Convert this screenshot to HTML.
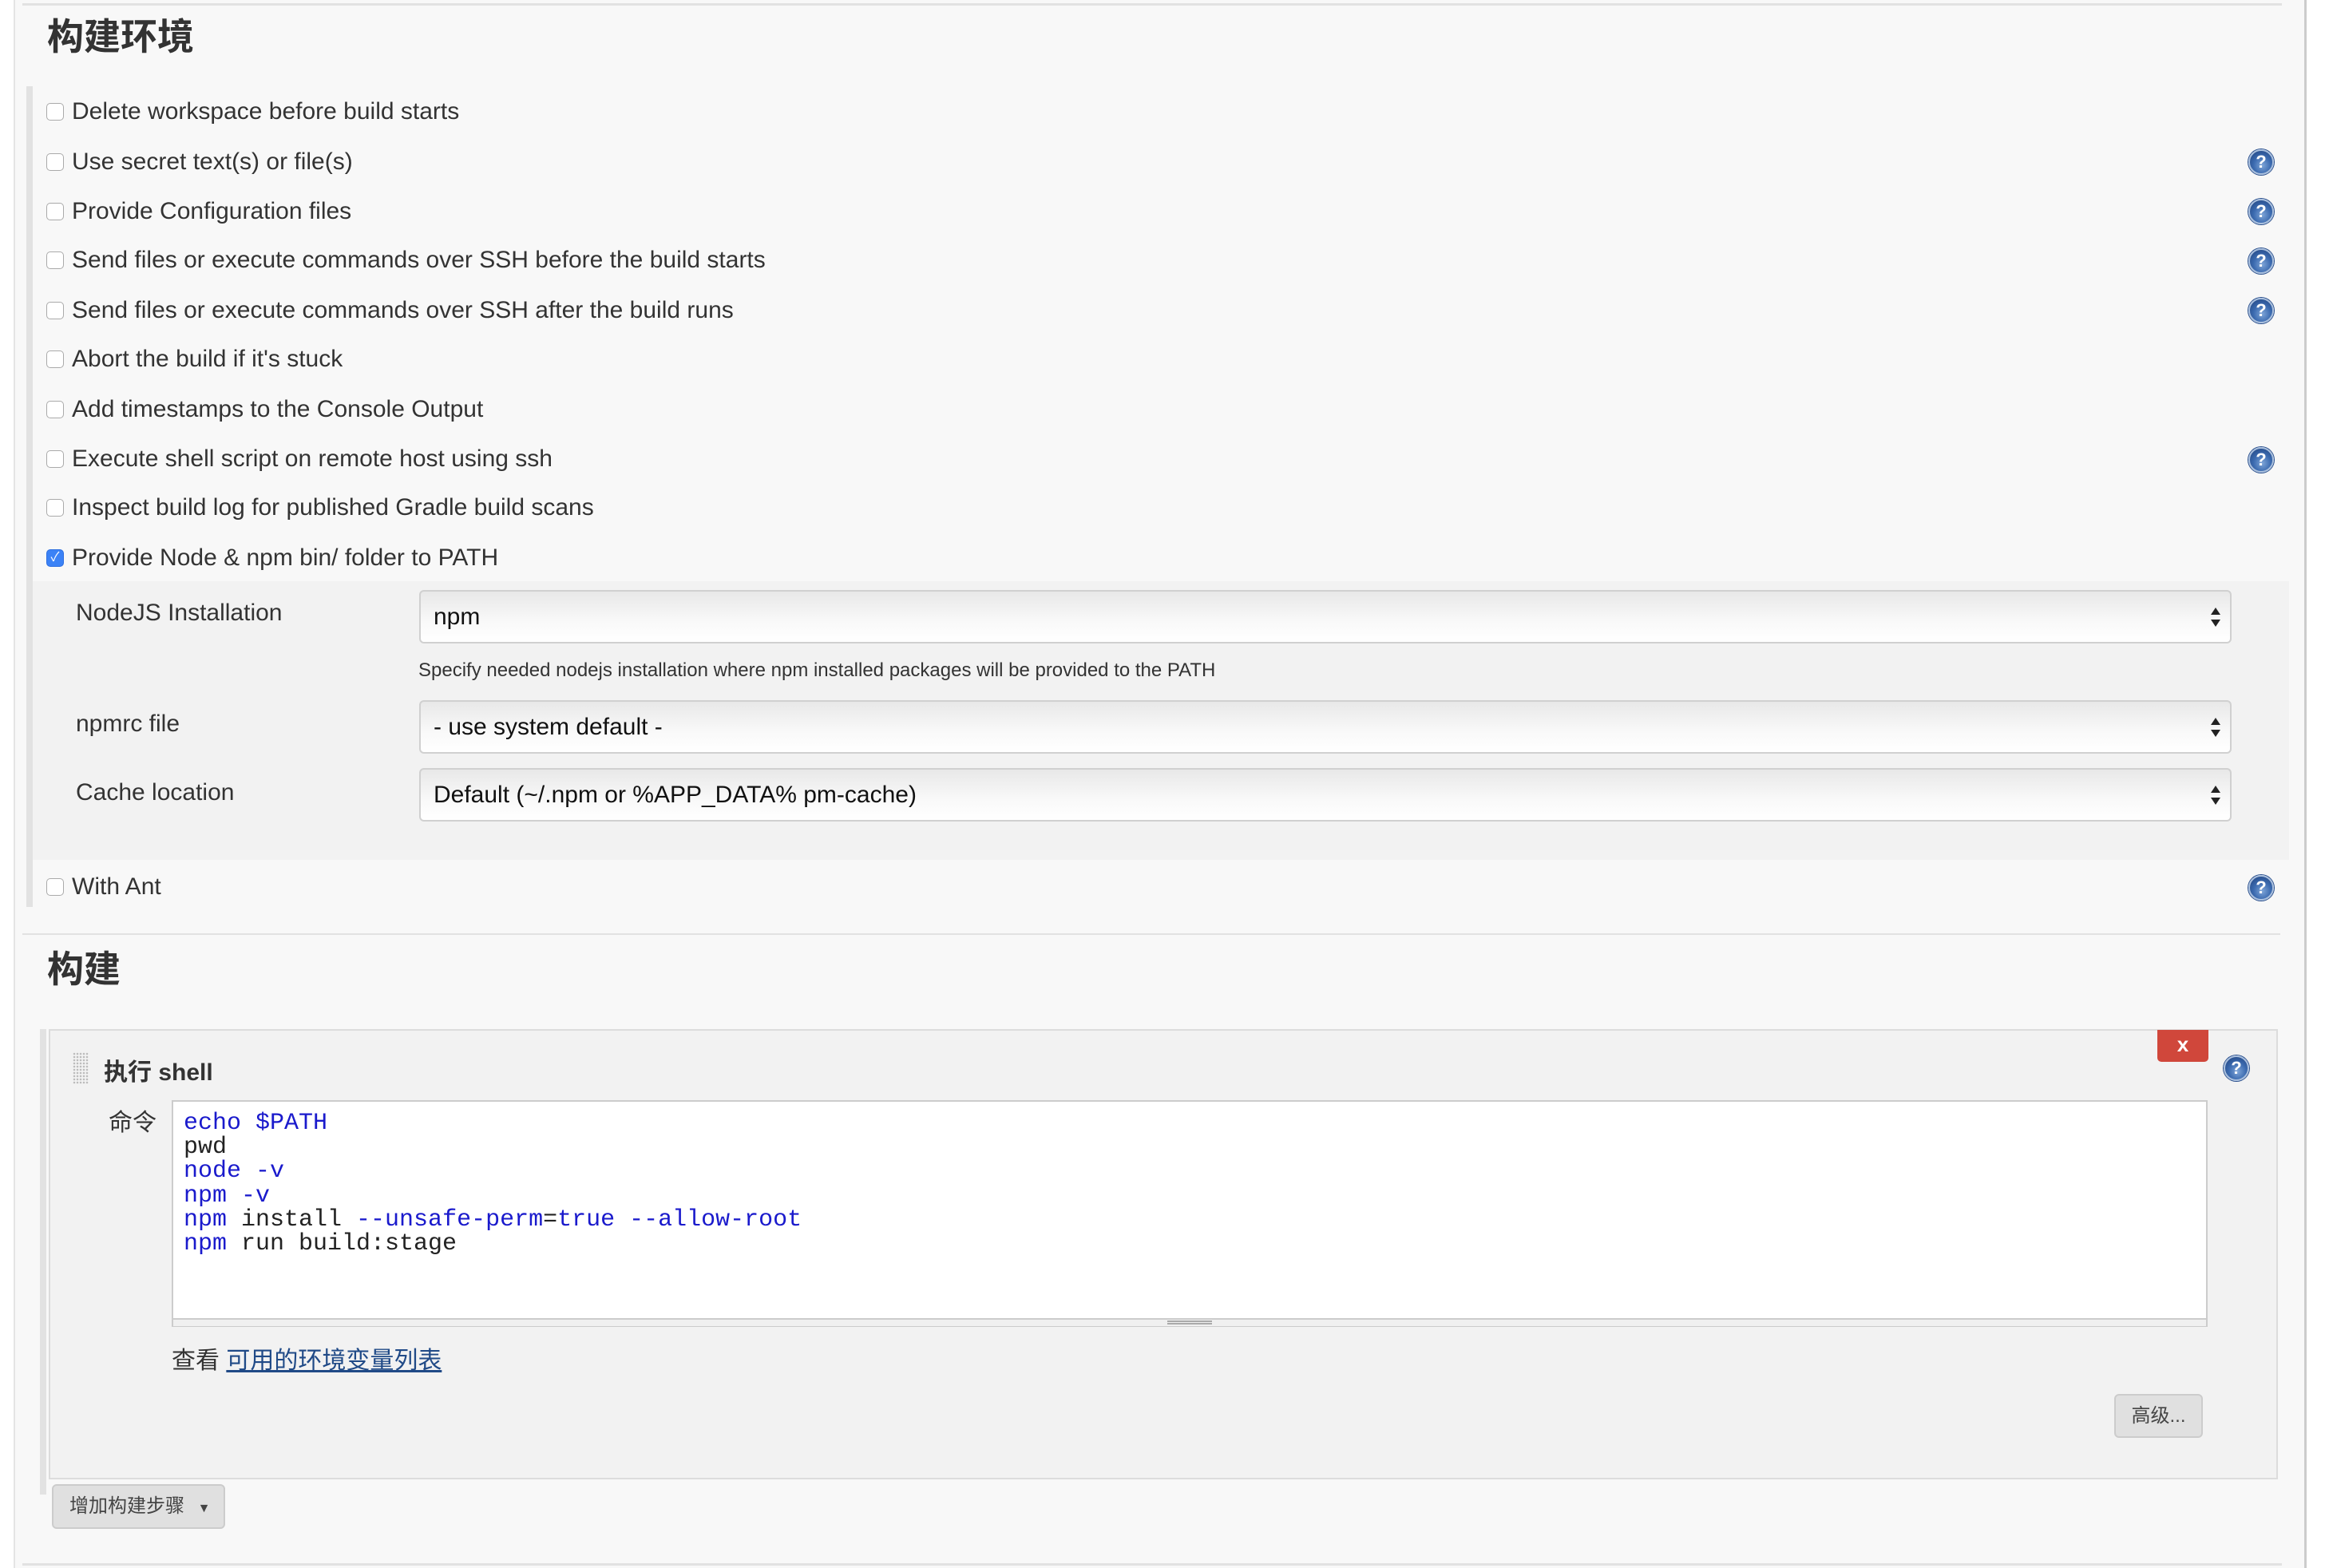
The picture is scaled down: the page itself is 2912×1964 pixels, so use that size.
<!DOCTYPE html>
<html><head><meta charset="utf-8"><style>
*{margin:0;padding:0;box-sizing:border-box}
body{width:2912px;height:1964px;background:#fff;position:relative;overflow:hidden;font-family:"Liberation Sans","Noto Sans CJK SC",sans-serif;color:#333}
.a{position:absolute}
.page{left:17px;top:0;width:2872px;height:1964px;background:#f8f8f8;border-left:2px solid #e4e4e4;border-right:3px solid #ccc}
.hl{height:3px;background:#e2e2e2}
.h{font-size:46px;font-weight:bold;color:#333;line-height:50px}
.row{left:58px;height:30px;display:flex;align-items:center;font-size:30px;color:#333;white-space:nowrap}
.cb{width:22px;height:22px;border:1.5px solid #aaa;border-radius:5px;background:#fff;margin-right:10px}
.cb.on{background:#3b82f6;border-color:#2f6fe0;color:#fff;font-size:16px;text-align:center;line-height:20px}
.help{width:32px;height:32px;border-radius:50%;background:radial-gradient(circle at 55% 65%,#7ea5d8 0%,#3c6bb0 45%,#1d3f7a 100%);border:2px solid #a9bfdd;box-shadow:0 0 0 1px #2a4f8c;color:#fff;font:bold 22px "Liberation Sans",sans-serif;text-align:center;line-height:27px}
.lbl{font-size:30px;color:#333;line-height:30px}
.sel{left:525px;width:2270px;height:67px;border:2px solid #d0d0d0;border-radius:6px;background:linear-gradient(#e8e8e8,#f9f9f9 60%,#fff);font-size:30px;color:#111;line-height:63px;padding-left:16px}
.sel:after{content:"";position:absolute;right:12px;top:20px;border-left:6px solid transparent;border-right:6px solid transparent;border-bottom:9px solid #222}
.sel:before{content:"";position:absolute;right:12px;top:35px;border-left:6px solid transparent;border-right:6px solid transparent;border-top:9px solid #222}
.code{font-family:"Liberation Mono",monospace;font-size:30px;line-height:30.2px;color:#222;white-space:pre}
.b{color:#1a1acc}
.btn{background:#e0e0e0;border:2px solid #ccc;border-radius:6px;font-size:24px;color:#444;text-align:center}
</style></head><body>
<div class="a page"></div>
<div class="a hl" style="left:28px;top:4px;width:2830px"></div>
<div class="a h" style="left:59px;top:21px">构建环境</div>
<div class="a" style="left:33px;top:108px;width:8px;height:1028px;background:#e2e2e2"></div>
<div class="a" style="left:41px;top:728px;width:2826px;height:349px;background:#f2f2f2"></div>

<div class="a row" style="top:125px"><div class="cb"></div>Delete workspace before build starts</div>
<div class="a row" style="top:188px"><div class="cb"></div>Use secret text(s) or file(s)</div>
<div class="a row" style="top:250px"><div class="cb"></div>Provide Configuration files</div>
<div class="a row" style="top:311px"><div class="cb"></div>Send files or execute commands over SSH before the build starts</div>
<div class="a row" style="top:374px"><div class="cb"></div>Send files or execute commands over SSH after the build runs</div>
<div class="a row" style="top:435px"><div class="cb"></div>Abort the build if it's stuck</div>
<div class="a row" style="top:498px"><div class="cb"></div>Add timestamps to the Console Output</div>
<div class="a row" style="top:560px"><div class="cb"></div>Execute shell script on remote host using ssh</div>
<div class="a row" style="top:621px"><div class="cb"></div>Inspect build log for published Gradle build scans</div>
<div class="a row" style="top:684px"><div class="cb on">✓</div>Provide Node &amp; npm bin/ folder to PATH</div>
<div class="a row" style="top:1096px"><div class="cb"></div>With Ant</div>

<div class="a help" style="left:2816px;top:187px">?</div>
<div class="a help" style="left:2816px;top:249px">?</div>
<div class="a help" style="left:2816px;top:311px">?</div>
<div class="a help" style="left:2816px;top:373px">?</div>
<div class="a help" style="left:2816px;top:560px">?</div>
<div class="a help" style="left:2816px;top:1096px">?</div>

<div class="a lbl" style="left:95px;top:753px">NodeJS Installation</div>
<div class="a sel" style="top:739px">npm</div>
<div class="a" style="left:524px;top:826px;font-size:24px;color:#333">Specify needed nodejs installation where npm installed packages will be provided to the PATH</div>
<div class="a lbl" style="left:95px;top:892px">npmrc file</div>
<div class="a sel" style="top:877px">- use system default -</div>
<div class="a lbl" style="left:95px;top:978px">Cache location</div>
<div class="a sel" style="top:962px">Default (~/.npm or %APP_DATA% pm-cache)</div>

<div class="a hl" style="left:28px;top:1169px;width:2828px;height:2px"></div>
<div class="a h" style="left:59px;top:1189px">构建</div>

<div class="a" style="left:50px;top:1289px;width:8px;height:583px;background:#e2e2e2"></div>
<div class="a" style="left:61px;top:1289px;width:2792px;height:564px;background:#f2f2f2;border:2px solid #dcdcdc"></div>
<div class="a" style="left:91px;top:1318px;width:20px;height:40px;background-image:radial-gradient(#bbb 1px,transparent 1.5px);background-size:4px 4px"></div>
<div class="a" style="left:130px;top:1318px;font-size:30px;font-weight:bold;color:#333">执行 shell</div>
<div class="a" style="left:2702px;top:1290px;width:64px;height:40px;background:#d0473b;border-radius:0 0 5px 5px;color:#fff;font:bold 26px 'Liberation Sans',sans-serif;text-align:center;line-height:36px">x</div>
<div class="a help" style="left:2785px;top:1322px">?</div>
<div class="a lbl" style="left:136px;top:1392px">命令</div>
<div class="a" style="left:215px;top:1378px;width:2550px;height:284px;background:#fff;border:2px solid #ccc"></div>
<div class="a" style="left:217px;top:1651px;width:2546px;height:10px;background:#f0f0f0;border-top:2px solid #ccc"></div>
<div class="a" style="left:1462px;top:1654px;width:56px;height:5px;border-top:2px solid #aaa;border-bottom:2px solid #aaa"></div>
<div class="a code" style="left:230px;top:1392px"><span class="b">echo $PATH</span>
pwd
<span class="b">node -v</span>
<span class="b">npm -v</span>
<span class="b">npm</span> install <span class="b">--unsafe-perm</span>=<span class="b">true --allow-root</span>
<span class="b">npm</span> run build:stage</div>
<div class="a lbl" style="left:215px;top:1690px">查看 <span style="color:#204a87;text-decoration:underline">可用的环境变量列表</span></div>
<div class="a btn" style="left:2648px;top:1746px;width:111px;height:55px;line-height:51px">高级...</div>
<div class="a btn" style="left:65px;top:1859px;width:217px;height:56px;line-height:52px;text-align:left;padding-left:20px">增加构建步骤 <span style="font-size:16px;margin-left:10px">▼</span></div>
<div class="a hl" style="left:28px;top:1958px;width:2830px"></div>
</body></html>
